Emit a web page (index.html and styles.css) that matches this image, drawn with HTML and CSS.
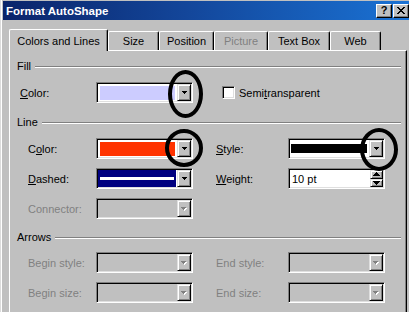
FILE: index.html
```html
<!DOCTYPE html>
<html>
<head>
<meta charset="utf-8">
<title>Format AutoShape</title>
<link rel="stylesheet" href="styles.css">
</head>
<body>
<div class="window">
  <div class="frame">
    <div class="titlebar">
      <span class="title">Format AutoShape</span>
      <div class="tb-buttons">
        <span class="tb-btn">?</span>
        <span class="tb-btn"><svg width="8" height="7" viewBox="0 0 8 7"><path d="M0 0h2v1H0zM6 0h2v1H6zM1 1h2v1H1zM5 1h2v1H5zM2 2h4v1H2zM3 3h2v1H3zM2 4h4v1H2zM1 5h2v1H1zM5 5h2v1H5zM0 6h2v1H0zM6 6h2v1H6z"/></svg></span>
      </div>
    </div>

    <div class="tabs">
      <div class="tab active w-colors">Colors and Lines</div>
      <div class="tab w-size">Size</div>
      <div class="tab w-position">Position</div>
      <div class="tab w-picture disabled-text">Picture</div>
      <div class="tab w-textbox">Text Box</div>
      <div class="tab w-web">Web</div>
    </div>

    <div class="panel">
      <div class="section">
        <div class="section-head"><span>Fill</span><span class="rule"></span></div>
        <div class="row row-fill">
          <span class="lbl"><u>C</u>olor:</span>
          <div class="combo">
            <div class="swatch sw-lavender"></div>
            <div class="drop"><svg width="5" height="3" viewBox="0 0 5 3"><path d="M0 0h5v1H0zM1 1h3v1H1zM2 2h1v1H2z"/></svg></div>
          </div>
          <div class="check"><span class="box"></span><span>Semi<u>t</u>ransparent</span></div>
        </div>
      </div>

      <div class="section">
        <div class="section-head"><span>Line</span><span class="rule"></span></div>
        <div class="row">
          <span class="lbl">C<u>o</u>lor:</span>
          <div class="combo">
            <div class="swatch sw-red"></div>
            <div class="drop"><svg width="5" height="3" viewBox="0 0 5 3"><path d="M0 0h5v1H0zM1 1h3v1H1zM2 2h1v1H2z"/></svg></div>
          </div>
          <span class="lbl lbl-r"><u>S</u>tyle:</span>
          <div class="combo">
            <div class="linebox"><span class="bar-black"></span></div>
            <div class="drop"><svg width="5" height="3" viewBox="0 0 5 3"><path d="M0 0h5v1H0zM1 1h3v1H1zM2 2h1v1H2z"/></svg></div>
          </div>
        </div>
        <div class="row">
          <span class="lbl"><u>D</u>ashed:</span>
          <div class="combo">
            <div class="navybox"><span class="bar-white"></span></div>
            <div class="drop"><svg width="5" height="3" viewBox="0 0 5 3"><path d="M0 0h5v1H0zM1 1h3v1H1zM2 2h1v1H2z"/></svg></div>
          </div>
          <span class="lbl lbl-r"><u>W</u>eight:</span>
          <div class="combo textbox">
            <span class="value">10 pt</span>
            <div class="spin">
              <div class="spin-btn"><svg width="7" height="4" viewBox="0 0 7 4"><path d="M3 0h1v1H3zM2 1h3v1H2zM1 2h5v1H1zM0 3h7v1H0z"/></svg></div>
              <div class="spin-btn"><svg width="7" height="4" viewBox="0 0 7 4"><path d="M0 0h7v1H0zM1 1h5v1H1zM2 2h3v1H2zM3 3h1v1H3z"/></svg></div>
            </div>
          </div>
        </div>
        <div class="row">
          <span class="lbl disabled-text">Connector:</span>
          <div class="combo disabled">
            <div class="empty"></div>
            <div class="drop"><svg width="6" height="4" viewBox="0 0 6 4"><path fill="#fff" d="M1 1h5v1H1zM2 2h3v1H2zM3 3h1v1H3z"/><path fill="#808080" d="M0 0h5v1H0zM1 1h3v1H1zM2 2h1v1H2z"/></svg></div>
          </div>
        </div>
      </div>

      <div class="section section-arrows">
        <div class="section-head"><span>Arrows</span><span class="rule"></span></div>
        <div class="row">
          <span class="lbl disabled-text">Begin style:</span>
          <div class="combo disabled">
            <div class="empty"></div>
            <div class="drop"><svg width="6" height="4" viewBox="0 0 6 4"><path fill="#fff" d="M1 1h5v1H1zM2 2h3v1H2zM3 3h1v1H3z"/><path fill="#808080" d="M0 0h5v1H0zM1 1h3v1H1zM2 2h1v1H2z"/></svg></div>
          </div>
          <span class="lbl lbl-r disabled-text">End style:</span>
          <div class="combo disabled">
            <div class="empty"></div>
            <div class="drop"><svg width="6" height="4" viewBox="0 0 6 4"><path fill="#fff" d="M1 1h5v1H1zM2 2h3v1H2zM3 3h1v1H3z"/><path fill="#808080" d="M0 0h5v1H0zM1 1h3v1H1zM2 2h1v1H2z"/></svg></div>
          </div>
        </div>
        <div class="row">
          <span class="lbl disabled-text">Begin size:</span>
          <div class="combo disabled">
            <div class="empty"></div>
            <div class="drop"><svg width="6" height="4" viewBox="0 0 6 4"><path fill="#fff" d="M1 1h5v1H1zM2 2h3v1H2zM3 3h1v1H3z"/><path fill="#808080" d="M0 0h5v1H0zM1 1h3v1H1zM2 2h1v1H2z"/></svg></div>
          </div>
          <span class="lbl lbl-r disabled-text">End size:</span>
          <div class="combo disabled">
            <div class="empty"></div>
            <div class="drop"><svg width="6" height="4" viewBox="0 0 6 4"><path fill="#fff" d="M1 1h5v1H1zM2 2h3v1H2zM3 3h1v1H3z"/><path fill="#808080" d="M0 0h5v1H0zM1 1h3v1H1zM2 2h1v1H2z"/></svg></div>
          </div>
        </div>
      </div>
    </div>
  </div>

  <div class="ring ring-1"></div>
  <div class="ring ring-2"></div>
  <div class="ring ring-3"></div>
</div>
</body>
</html>
```

FILE: styles.css
```css
* { box-sizing: border-box; }

body {
  margin: 0;
  background: #c0c0c0;
  font-family: "Liberation Sans", Arial, sans-serif;
  font-size: 11px;
  color: #000;
}

.window {
  position: relative;
  width: 409px;
  height: 312px;
  overflow: hidden;
  background: #c0c0c0;
  border-left: 1px solid #dcdcdc;
}

.frame {
  height: 100%;
  border-left: 1px solid #fff;
  padding-left: 1px;
  padding-top: 1px;
}

/* Title bar */
.titlebar {
  height: 19px;
  display: flex;
  align-items: center;
  justify-content: space-between;
  padding-left: 3px;
  background: linear-gradient(to right, #0a246a 0%, #13469a 45%, #1a72d4 100%);
}

.title {
  color: #fff;
  font-weight: bold;
  font-size: 11.5px;
}

.tb-buttons {
  display: flex;
  gap: 1px;
}

.tb-btn {
  width: 16px;
  height: 14px;
  background: #c0c0c0;
  border: 1px solid;
  border-color: #fff #000 #000 #fff;
  box-shadow: inset -1px -1px #808080;
  display: flex;
  align-items: center;
  justify-content: center;
  font-weight: bold;
  font-size: 11px;
  line-height: 1;
}

/* Tabs */
.tabs {
  display: flex;
  align-items: flex-end;
  height: 21px;
  margin-top: 9px;
  padding-left: 6px;
}

.tab {
  height: 19px;
  padding-top: 2px;
  line-height: 15px;
  text-align: center;
  background: #c0c0c0;
  border-top: 1px solid #fff;
  border-left: 1px solid #fff;
  border-right: 1px solid #000;
  box-shadow: inset -1px 0 #808080;
  border-radius: 2px 2px 0 0;
}

.tab.active {
  height: 22px;
  padding-top: 4px;
  margin-bottom: -1px;
  position: relative;
  z-index: 1;
}

.w-colors { width: 99px; }
.w-size { width: 51px; }
.w-position { width: 55px; }
.w-picture { width: 54px; }
.w-textbox { width: 62px; }
.w-web { width: 51px; }

.disabled-text { color: #808080; }

/* Panel */
.panel {
  height: 300px;
  margin: 0 2px 0 6px;
  padding: 9px 5px 0 0;
  border-top: 1px solid #fff;
  border-left: 1px solid #fff;
  border-right: 1px solid #000;
  box-shadow: inset -1px 0 #808080;
  display: flex;
  flex-direction: column;
  gap: 13px;
}

.section {
  display: flex;
  flex-direction: column;
  gap: 9px;
}

.section-arrows { margin-top: -1px; gap: 8px; }
.section-arrows .row + .row { margin-top: 1px; }

.section-head {
  height: 13px;
  display: flex;
  align-items: center;
  gap: 4px;
  padding-left: 7px;
  line-height: 13px;
}

.rule {
  flex: 1;
  height: 2px;
  border-top: 1px solid #808080;
  border-bottom: 1px solid #fff;
  margin-top: 1px;
}

.row {
  height: 21px;
  display: grid;
  grid-template-columns: 68px 97px 95px 97px;
  align-items: center;
  padding-left: 18px;
}

.row-fill {
  padding-left: 10px;
  grid-template-columns: 76px 97px 29px auto;
}

.row-fill .check { grid-column: 4; }

.lbl { white-space: nowrap; }
.lbl-r { padding-left: 23px; }

/* Combo boxes */
.combo {
  height: 21px;
  display: flex;
  padding: 1px;
  background: #fff;
  border: 1px solid;
  border-color: #808080 #fff #fff #808080;
  box-shadow: inset 1px 1px #000, inset -1px -1px #dfdfdf;
}

.combo.disabled { background: #c0c0c0; }

.swatch {
  flex: 1;
  margin: 2px 2px 1px 2px;
}

.sw-lavender { background: #ccccff; }
.sw-red { background: #ff3300; }

.linebox {
  flex: 1;
  display: flex;
  align-items: center;
  padding: 0 2px 0 1px;
}

.bar-black {
  flex: 1;
  height: 9px;
  background: #000;
}

.navybox {
  flex: 1;
  display: flex;
  align-items: center;
  padding: 0 2px 0 2px;
  margin-right: 1px;
  background: #000080;
}

.bar-white {
  flex: 1;
  height: 3px;
  background: #fff;
}

.empty { flex: 1; }

.drop {
  width: 14px;
  height: 100%;
  display: flex;
  align-items: center;
  justify-content: center;
  background: #c0c0c0;
  border: 1px solid;
  border-color: #dfdfdf #000 #000 #dfdfdf;
  box-shadow: inset 1px 1px #fff, inset -1px -1px #808080;
}

.drop svg { display: block; }

/* Text box with spinner */
.textbox { align-items: center; }

.value {
  flex: 1;
  padding-left: 2px;
}

.spin {
  width: 13px;
  height: 100%;
  display: flex;
  flex-direction: column;
}

.spin-btn {
  flex: 1;
  display: flex;
  align-items: center;
  justify-content: center;
  background: #c0c0c0;
  border: 1px solid;
  border-color: #dfdfdf #000 #000 #dfdfdf;
  box-shadow: inset 1px 1px #fff, inset -1px -1px #808080;
}

.spin-btn svg { display: block; }

/* Checkbox */
.check {
  display: flex;
  align-items: center;
  gap: 4px;
  white-space: nowrap;
}

.box {
  width: 13px;
  height: 13px;
  background: #fff;
  border: 1px solid;
  border-color: #808080 #fff #fff #808080;
  box-shadow: inset 1px 1px #000, inset -1px -1px #dfdfdf;
}

/* Annotation rings drawn over the dialog */
.ring {
  position: absolute;
  border: 4px solid #000;
  border-radius: 50%;
}

.ring-1 { left: 167px; top: 70px; width: 35px; height: 48px; }
.ring-2 { left: 164px; top: 129px; width: 38px; height: 38px; }
.ring-3 { left: 359px; top: 128px; width: 38px; height: 43px; }
```
